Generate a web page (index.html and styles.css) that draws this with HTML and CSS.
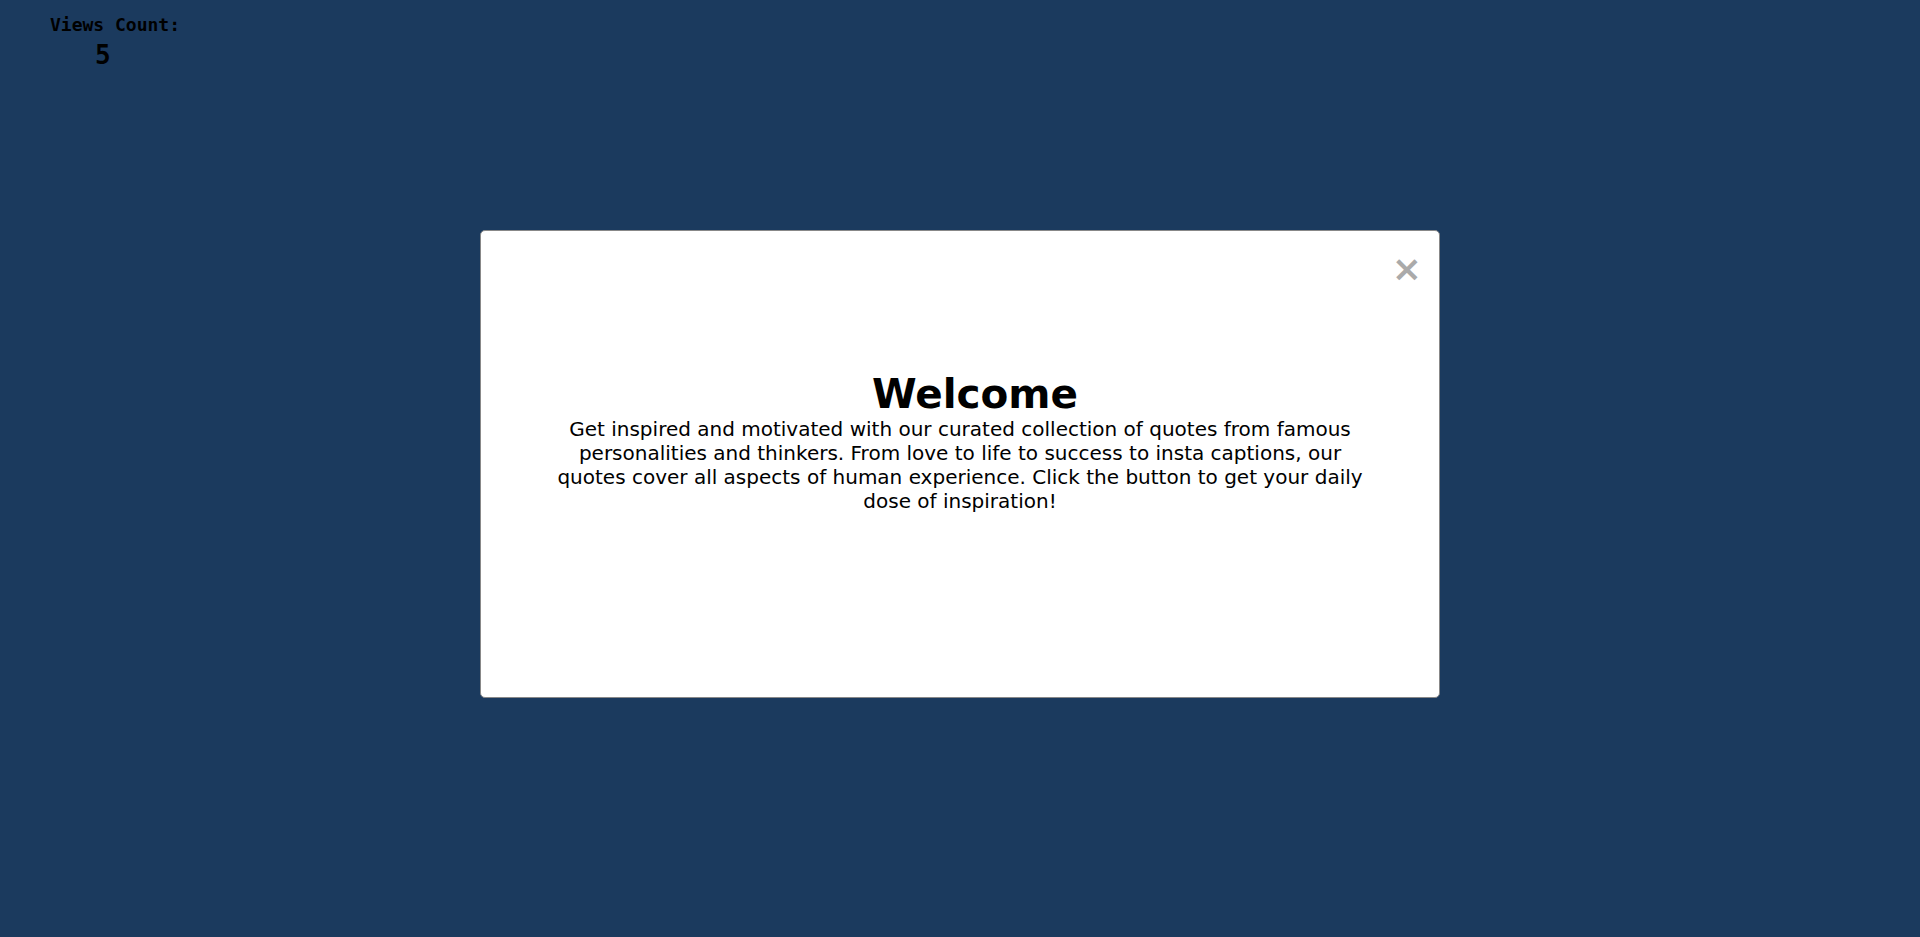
FILE: index.html
```html
<!DOCTYPE html>
<html lang="en">
<head>
<meta charset="utf-8">
<title>Quotes</title>
<link rel="stylesheet" href="styles.css">
</head>
<body>
<div class="views">
  <div class="views-label">Views Count:</div>
  <div class="views-num">5</div>
</div>
<div class="overlay">
  <div class="modal">
    <span class="close">&times;</span>
    <div class="modal-body">
      <h1 class="title">Welcome</h1>
      <p class="desc">Get inspired and motivated with our curated collection of quotes from famous personalities and thinkers. From love to life to success to insta captions, our quotes cover all aspects of human experience. Click the button to get your daily dose of inspiration!</p>
    </div>
  </div>
</div>
</body>
</html>
```

FILE: styles.css
```css
html, body {
  margin: 0;
  padding: 0;
  height: 100%;
}
body {
  background: #1b3a5e;
  font-family: "DejaVu Sans", Verdana, sans-serif;
  color: #000;
}
.views {
  position: absolute;
  left: 50px;
  top: 15px;
  font-family: "DejaVu Sans Mono", monospace;
}
.views-label {
  font-size: 18px;
  font-weight: bold;
  line-height: 20px;
}
.views-num {
  margin-top: 4px;
  margin-left: 45px;
  font-size: 26px;
  font-weight: bold;
  line-height: 32px;
}
.overlay {
  position: fixed;
  inset: 0;
  display: flex;
  justify-content: center;
  align-items: flex-start;
  padding-top: 230px;
}
.modal {
  position: relative;
  width: 958px;
  height: 466px;
  background: #fff;
  border: 1px solid #888;
  border-radius: 5px;
  box-sizing: content-box;
  display: flex;
  justify-content: center;
}
.close {
  position: absolute;
  right: 17px;
  top: 18px;
  color: #aaa;
  font-size: 36px;
  font-weight: bold;
  line-height: 40px;
}
.modal-body {
  width: 826px;
  padding-top: 140px;
  text-align: center;
}
.title {
  margin: 0;
  padding-left: 30px;
  font-size: 40.5px;
  font-weight: bold;
  line-height: 46px;
}
.desc {
  margin: 0;
  font-size: 20px;
  line-height: 24px;
}
```
